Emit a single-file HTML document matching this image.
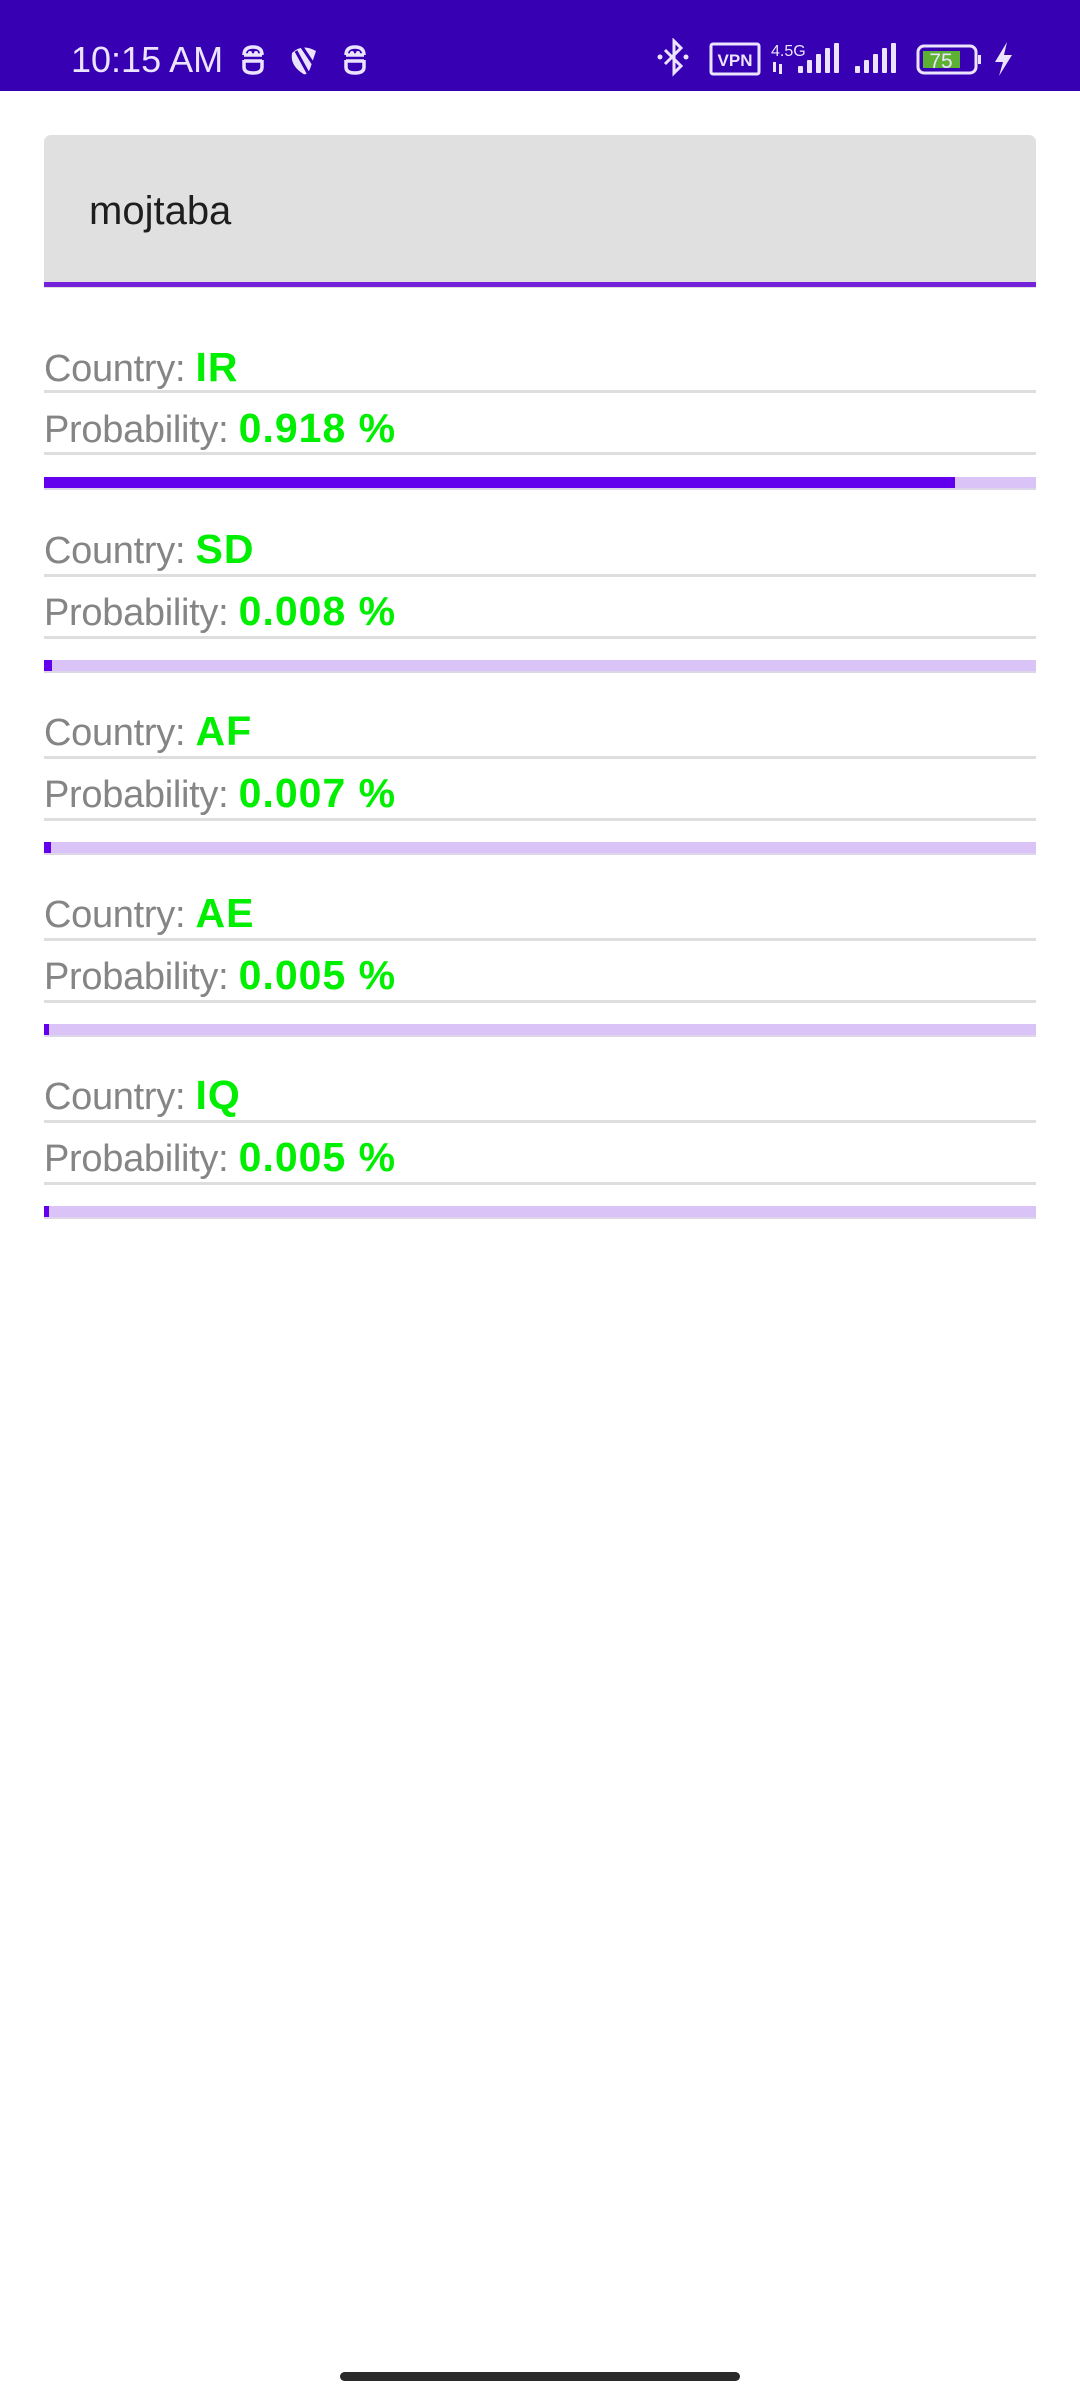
<!DOCTYPE html>
<html><head><meta charset="utf-8"><style>
*{margin:0;padding:0;box-sizing:border-box}
body{width:1080px;height:2400px;background:#fff;position:relative;overflow:hidden;font-family:"Liberation Sans",sans-serif}
.abs{position:absolute}
.sb{left:0;top:0;width:1080px;height:91px;background:#3700b3}
.lbl{position:absolute;left:44px;font-size:38px;line-height:38px;color:#858585;white-space:nowrap;letter-spacing:-0.3px}
.lbl b{color:#00ee00;font-weight:bold;letter-spacing:1px;font-size:41px}
.div{position:absolute;left:44px;width:992px;height:3px;background:#dedede}
.track{position:absolute;left:44px;width:992px;height:13px;background:#d9c3f7;border-bottom:2px solid #dcd6e8}
.ind{position:absolute;left:0;top:0;height:11px;background:#6200ee}
</style></head><body>
<div class="abs sb"></div>
<div class="abs" style="left:71px;top:42px;font-size:36px;line-height:36px;color:#ece4ff">10:15 AM</div>
<svg class="abs" style="left:240px;top:43px" width="130" height="34" viewBox="0 0 130 34">
<g fill="none" stroke="#ece4ff" stroke-width="3.5">
<path d="M4 12 H22 M4 12 Q4 4 13 4 Q22 4 22 12 M4 17 V24 Q4 30 13 30 Q22 30 22 24 V17 M4 18 H22"/>
<path d="M106 12 H124 M106 12 Q106 4 115 4 Q124 4 124 12 M106 17 V24 Q106 30 115 30 Q124 30 124 24 V17 M106 18 H124"/>
</g>
<circle cx="10" cy="10" r="2" fill="#ece4ff"/><circle cx="16" cy="10" r="2" fill="#ece4ff"/>
<circle cx="112" cy="10" r="2" fill="#ece4ff"/><circle cx="118" cy="10" r="2" fill="#ece4ff"/>
<path d="M52 10 Q62 0 76 8 L70 26 Q66 34 62 30 Q50 22 52 10Z" fill="#ece4ff"/>
<path d="M56 8 L68 30 M62 4 L74 22" stroke="#3700b3" stroke-width="3"/>
</svg>
<svg class="abs" style="left:655px;top:38px" width="370" height="42" viewBox="0 0 370 42">
<g stroke="#ece4ff" stroke-width="3" fill="none">
<path d="M10 12 L26 28 L19 35 V3 L26 10 L10 26"/>
<rect x="56" y="6" width="48" height="30" rx="2"/>
<rect x="263" y="8" width="58" height="27" rx="6"/>
</g>
<circle cx="5" cy="19" r="2.5" fill="#ece4ff"/><circle cx="31" cy="19" r="2.5" fill="#ece4ff"/>
<text x="80" y="28" font-size="17" font-weight="bold" fill="#ece4ff" text-anchor="middle" font-family="Liberation Sans">VPN</text>
<text x="116" y="18" font-size="16" fill="#ece4ff" font-family="Liberation Sans">4.5G</text>
<g fill="#ece4ff">
<rect x="118" y="24" width="3" height="10"/><rect x="124" y="26" width="3" height="10"/>
<rect x="143" y="28" width="5" height="7" rx="1"/><rect x="152" y="22" width="5" height="13" rx="1"/><rect x="161" y="16" width="5" height="19" rx="1"/><rect x="170" y="10" width="5" height="25" rx="1"/><rect x="179" y="5" width="5" height="30" rx="1"/>
<rect x="200" y="28" width="5" height="7" rx="1"/><rect x="209" y="22" width="5" height="13" rx="1"/><rect x="218" y="16" width="5" height="19" rx="1"/><rect x="227" y="10" width="5" height="25" rx="1"/><rect x="236" y="5" width="5" height="30" rx="1"/>
<rect x="323" y="17" width="3" height="9"/>
<path d="M352 4 L340 24 H348 L344 38 L357 17 H349 Z"/>
</g>
<rect x="268" y="13" width="37" height="17" fill="#5cb032"/>
<text x="286" y="30" font-size="21" fill="#ece4ff" text-anchor="middle" font-family="Liberation Sans">75</text>
</svg>

<div class="abs" style="left:44px;top:135px;width:992px;height:153px;background:#e0e0e0;border-radius:7px 7px 0 0"></div>
<div class="abs" style="left:44px;top:282px;width:992px;height:5px;background:#7422d9"></div>
<div class="abs" style="left:89px;top:191px;font-size:40px;line-height:40px;color:#1e1e1e">mojtaba</div>

<div class="lbl" style="top:348px">Country: <b>IR</b></div>
<div class="div" style="top:390px"></div>
<div class="lbl" style="top:409px">Probability: <b>0.918 %</b></div>
<div class="div" style="top:452px"></div>
<div class="track" style="top:477px"><div class="ind" style="width:911px"></div></div>

<div class="lbl" style="top:530px">Country: <b>SD</b></div>
<div class="div" style="top:574px"></div>
<div class="lbl" style="top:592px">Probability: <b>0.008 %</b></div>
<div class="div" style="top:636px"></div>
<div class="track" style="top:660px"><div class="ind" style="width:8px"></div></div>

<div class="lbl" style="top:712px">Country: <b>AF</b></div>
<div class="div" style="top:756px"></div>
<div class="lbl" style="top:774px">Probability: <b>0.007 %</b></div>
<div class="div" style="top:818px"></div>
<div class="track" style="top:842px"><div class="ind" style="width:7px"></div></div>

<div class="lbl" style="top:894px">Country: <b>AE</b></div>
<div class="div" style="top:938px"></div>
<div class="lbl" style="top:956px">Probability: <b>0.005 %</b></div>
<div class="div" style="top:1000px"></div>
<div class="track" style="top:1024px"><div class="ind" style="width:5px"></div></div>

<div class="lbl" style="top:1076px">Country: <b>IQ</b></div>
<div class="div" style="top:1120px"></div>
<div class="lbl" style="top:1138px">Probability: <b>0.005 %</b></div>
<div class="div" style="top:1182px"></div>
<div class="track" style="top:1206px"><div class="ind" style="width:5px"></div></div>

<div class="abs" style="left:340px;top:2372px;width:400px;height:9px;border-radius:5px;background:#2a2a2a"></div>
</body></html>
